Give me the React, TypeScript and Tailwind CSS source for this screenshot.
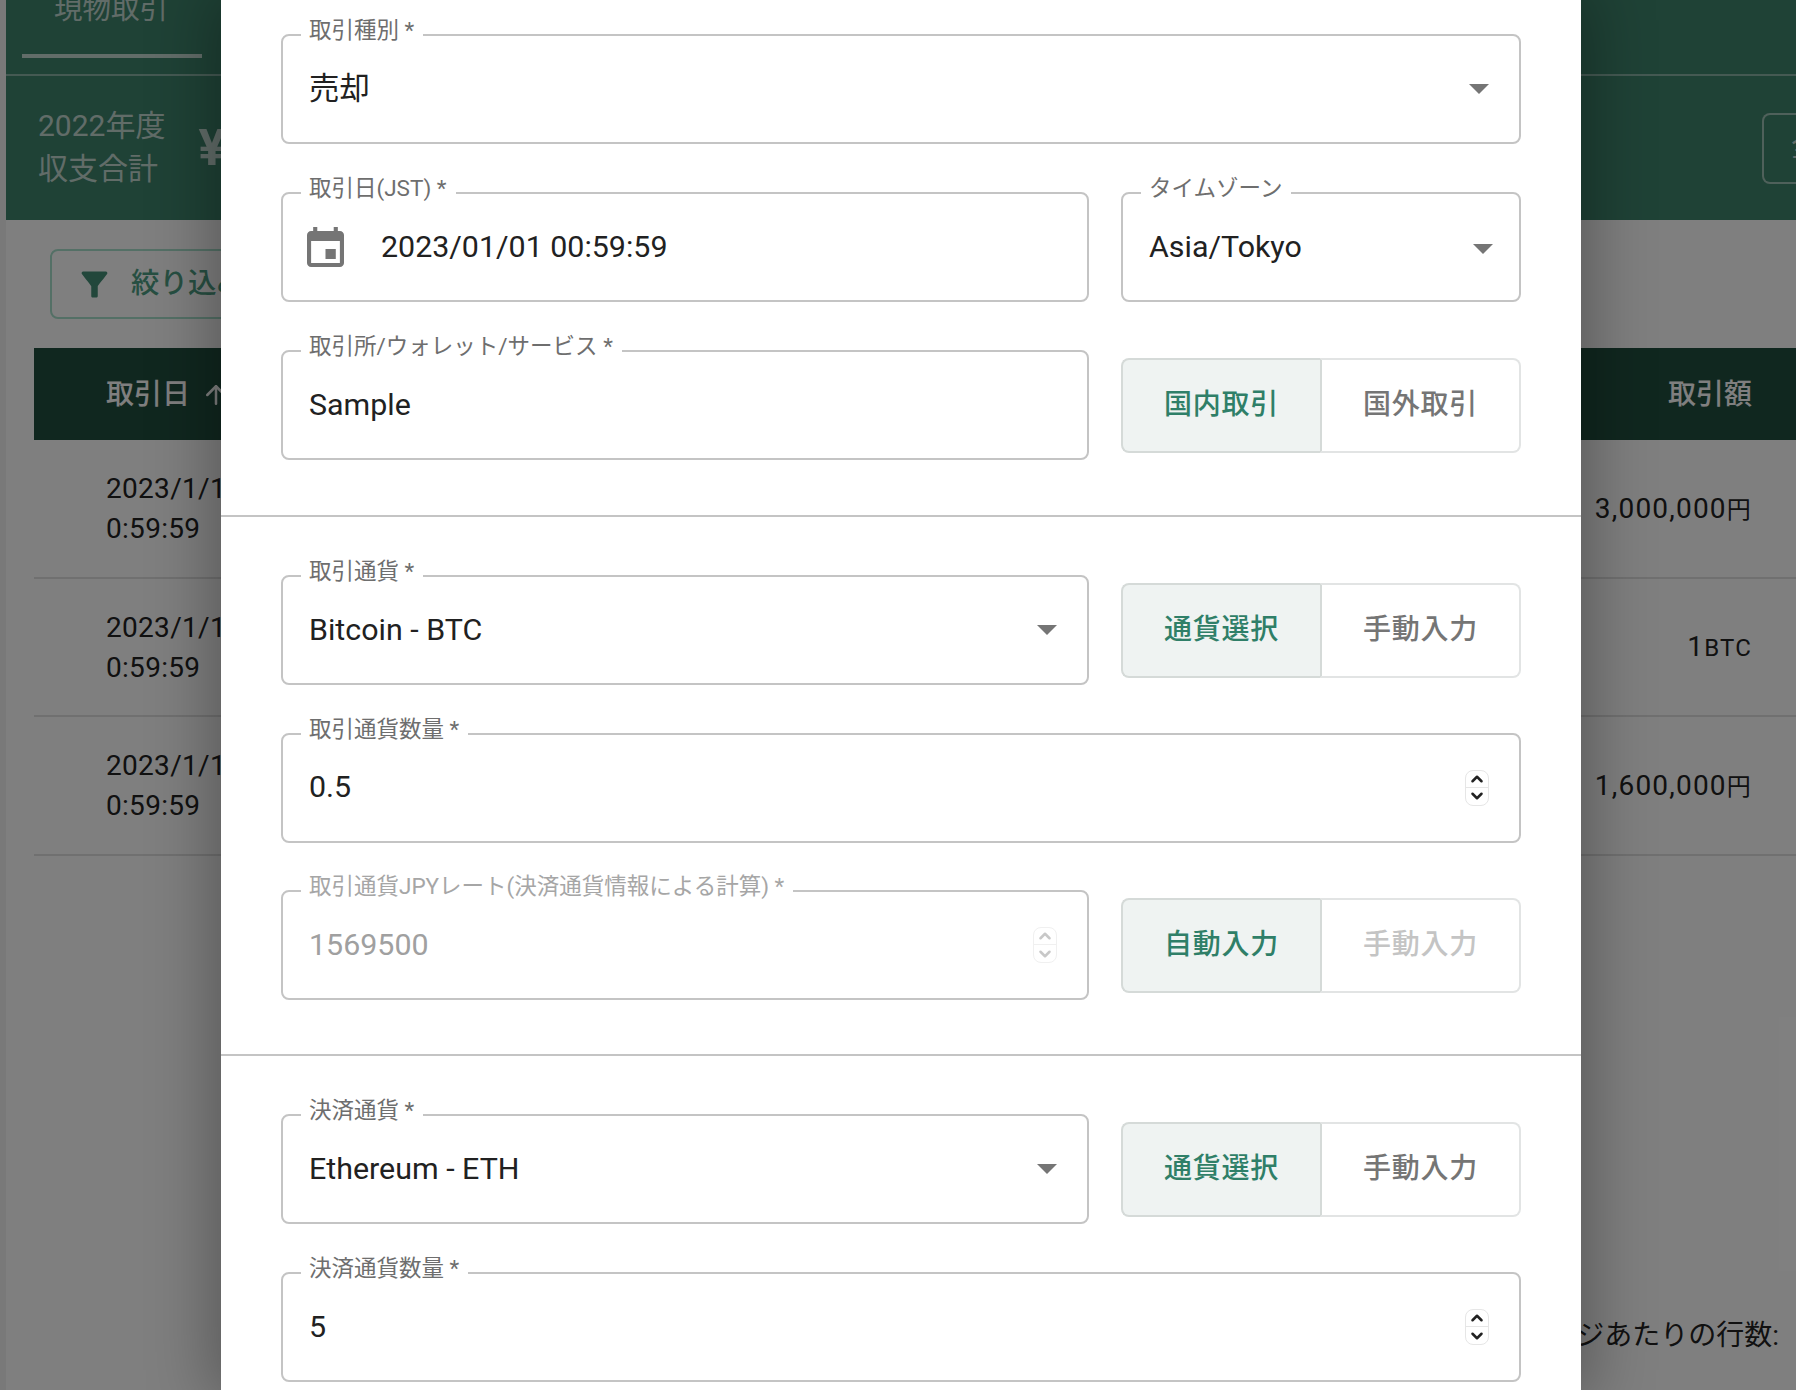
import React from 'react';
import { ArrowUp, ChevronDown, ChevronUp } from 'lucide-react';

const FONT = 'font-[Roboto,"Noto_Sans_CJK_JP",sans-serif]';

function Arrow({ className }: { className?: string }) {
  return (
    <svg width="20" height="10" viewBox="0 0 20 10" className={`shrink-0 ${className ?? ''}`}>
      <path d="M0 0h20L10 10z" fill="#757575" />
    </svg>
  );
}

function Spinner({ disabled }: { disabled?: boolean }) {
  const color = disabled ? 'text-[#c8c8c8]' : 'text-[#222222]';
  const border = disabled ? 'border-[#f0f0f0]' : 'border-[#e6e6e6]';
  return (
    <div className={`mr-[4px] flex h-[36px] w-[24px] flex-col items-center overflow-hidden rounded-[8px] border bg-white ${border}`}>
      <div className={`flex h-[17px] w-full items-center justify-center border-b ${border} ${color}`}>
        <ChevronUp size={18} strokeWidth={3.4} />
      </div>
      <div className={`flex h-[17px] w-full items-center justify-center ${color}`}>
        <ChevronDown size={18} strokeWidth={3.4} />
      </div>
    </div>
  );
}

function Field({
  label,
  value,
  disabled,
  icon,
  right,
  className,
}: {
  label: string;
  value: string;
  disabled?: boolean;
  icon?: React.ReactNode;
  right?: React.ReactNode;
  className?: string;
}) {
  return (
    <div className={`relative flex h-[110px] items-center rounded-[8px] border-2 border-[#c4c4c4] bg-white pl-[26px] pr-[26px] ${className ?? ''}`}>
      <label
        className={`absolute -top-[19px] left-[18px] bg-white pr-[9px] pl-[8px] text-[22.5px] leading-[26px] whitespace-nowrap ${disabled ? 'text-[#a6a6a6]' : 'text-[#6e6e6e]'}`}
      >
        {label}
      </label>
      {icon}
      <span className={`mb-[1px] flex-1 text-[30.4px] leading-[36px] ${disabled ? 'text-[#a0a0a0]' : 'text-[#212121]'}`}>
        {value}
      </span>
      {right}
    </div>
  );
}

function Toggle({ left, right, disabled }: { left: string; right: string; disabled?: boolean }) {
  return (
    <div className="flex h-[95px] self-center text-[28px] font-medium tracking-[0.8px]">
      <div className="flex flex-1 items-center justify-center rounded-l-[8px] border-2 border-r-0 border-[#d5dad8] bg-[#eff3f2] text-[#2f7f68]">
        {left}
      </div>
      <div className={`flex flex-1 items-center justify-center rounded-r-[8px] border-2 border-[#e2e4e4] border-l-[#d5dad8] bg-white ${disabled ? 'text-[#c4c4c4]' : 'text-[#757575]'}`}>
        {right}
      </div>
    </div>
  );
}

function CalendarIcon() {
  return (
    <svg width="37" height="40" viewBox="3 1 18 20" className="mr-[37px] ml-[-2px] shrink-0" preserveAspectRatio="none">
      <path
        fill="#757575"
        d="M17 12h-5v5h5v-5zM16 1v2H8V1H6v2H5c-1.11 0-1.99.9-1.99 2L3 19c0 1.1.89 2 2 2h14c1.1 0 2-.9 2-2V5c0-1.1-.9-2-2-2h-1V1h-2zm3 18H5V8h14v11z"
      />
    </svg>
  );
}

const rows = [
  { amount: '3,000,000', unit: '円' },
  { amount: '1', unit: 'BTC' },
  { amount: '1,600,000', unit: '円' },
];

function Page() {
  return (
    <div className="flex h-full">
      <div className="w-[6px] shrink-0 bg-[#f2f2f2]" />
      <div className="min-w-0 flex-1 bg-white">
        {/* Header */}
        <div className="h-[220px] bg-[#3f846c] text-white/70">
          <div className="relative h-[76px] border-b-2 border-white/40">
            <div className="absolute -top-[8px] left-[48px] text-[28.5px] leading-[36px]">現物取引</div>
            <div className="absolute top-[54px] left-[16px] h-[4px] w-[180px] bg-white/70" />
          </div>
          <div className="flex h-[144px] items-center justify-between">
            <div className="flex items-center">
              <div className="ml-[32px] pb-[2px] text-[30px] leading-[43px]">
                2022年度
                <br />
                収支合計
              </div>
              <div className="ml-[33px] text-[50px] font-bold text-white/70">¥</div>
            </div>
            <div className="h-[71px] w-[34px] rounded-l-[8px] border-2 border-r-0 border-white/50 pl-[27px] pt-[14px] text-[28px] leading-[36px]">全</div>
          </div>
        </div>

        {/* Filter */}
        <div className="px-[28px] pt-[29px] pb-[29px]">
          <div className="ml-[16px] flex h-[70px] w-[300px] items-center gap-[17px] rounded-[8px] border-2 border-[#a8e0cc] pl-[23px] text-[28.5px] font-medium text-[#4f9f85]">
            <svg width="39" height="39" viewBox="0 0 24 24" className="shrink-0">
              <path
                fill="#458f77"
                d="M4.25 5.61C6.27 8.2 10 13 10 13v6c0 .55.45 1 1 1h2c.55 0 1-.45 1-1v-6s3.72-4.8 5.74-7.39c.51-.66.04-1.61-.79-1.61H5.04c-.83 0-1.3.95-.79 1.61z"
              />
            </svg>
            絞り込み
          </div>
        </div>

        {/* Table */}
        <div className="ml-[28px]">
          <div className="flex h-[92px] items-center justify-between bg-[#204e3e] pt-[2px] pr-[44px] pl-[72px] text-[28px] font-medium text-white">
            <div className="flex items-center gap-[11px]">
              取引日
              <ArrowUp size={30} />
            </div>
            <div>取引額</div>
          </div>
          {rows.map((row) => (
            <div key={row.amount} className="flex h-[138.5px] items-center justify-between border-b-2 border-[#e0e0e0] pt-[2px] pr-[44px] pl-[72px] text-[28px] leading-[40px] tracking-[0.3px] text-[#222222]">
              <div>
                2023/1/1
                <br />
                0:59:59
              </div>
              <div className="tracking-[1.2px]">
                {row.amount}
                <span className="text-[24px]">{row.unit}</span>
              </div>
            </div>
          ))}
        </div>

        {/* Pagination */}
        <div className="mt-[460px] pr-[17px] text-right text-[28px] leading-[40px] text-[#222222]">1ページあたりの行数:</div>
      </div>
    </div>
  );
}

export default function App() {
  return (
    <div className={`relative h-[1390px] w-[1796px] overflow-hidden ${FONT}`}>
      <Page />

      {/* Backdrop */}
      <div className="absolute inset-0 bg-black/50" />

      {/* Modal */}
      <div className="absolute top-0 bottom-0 left-[221px] w-[1360px] bg-white shadow-[0_0_60px_10px_rgba(0,0,0,0.3)]">
        <div className="flex flex-col gap-[48px] px-[60px] pt-[34px] pb-[55px]">
          <Field label="取引種別 *" value="売却" right={<Arrow className="mr-[4px]" />} />
          <div className="grid grid-cols-[808px_1fr] gap-[32px]">
            <Field label="取引日(JST) *" value="2023/01/01 00:59:59" icon={<CalendarIcon />} />
            <Field label="タイムゾーン" value="Asia/Tokyo" right={<Arrow className="mt-[3px]" />} />
          </div>
          <div className="grid grid-cols-[808px_1fr] gap-[32px]">
            <Field label="取引所/ウォレット/サービス *" value="Sample" />
            <Toggle left="国内取引" right="国外取引" />
          </div>
        </div>
        <div className="h-[2px] bg-[#c4c4c4]" />

        <div className="flex flex-col gap-[47.5px] px-[60px] pt-[58px] pb-[54px]">
          <div className="grid grid-cols-[808px_1fr] gap-x-[32px]">
            <Field label="取引通貨 *" value="Bitcoin - BTC" right={<Arrow className="mr-[4px]" />} />
            <Toggle left="通貨選択" right="手動入力" />
          </div>
          <Field label="取引通貨数量 *" value="0.5" right={<Spinner />} />
          <div className="grid grid-cols-[808px_1fr] gap-x-[32px]">
            <Field label="取引通貨JPYレート(決済通貨情報による計算) *" value="1569500" disabled right={<Spinner disabled />} />
            <Toggle left="自動入力" right="手動入力" disabled />
          </div>
        </div>
        <div className="h-[2px] bg-[#c4c4c4]" />

        <div className="flex flex-col gap-[48px] px-[60px] pt-[58px]">
          <div className="grid grid-cols-[808px_1fr] gap-x-[32px]">
            <Field label="決済通貨 *" value="Ethereum - ETH" right={<Arrow className="mr-[4px]" />} />
            <Toggle left="通貨選択" right="手動入力" />
          </div>
          <Field label="決済通貨数量 *" value="5" right={<Spinner />} />
        </div>
      </div>
    </div>
  );
}
